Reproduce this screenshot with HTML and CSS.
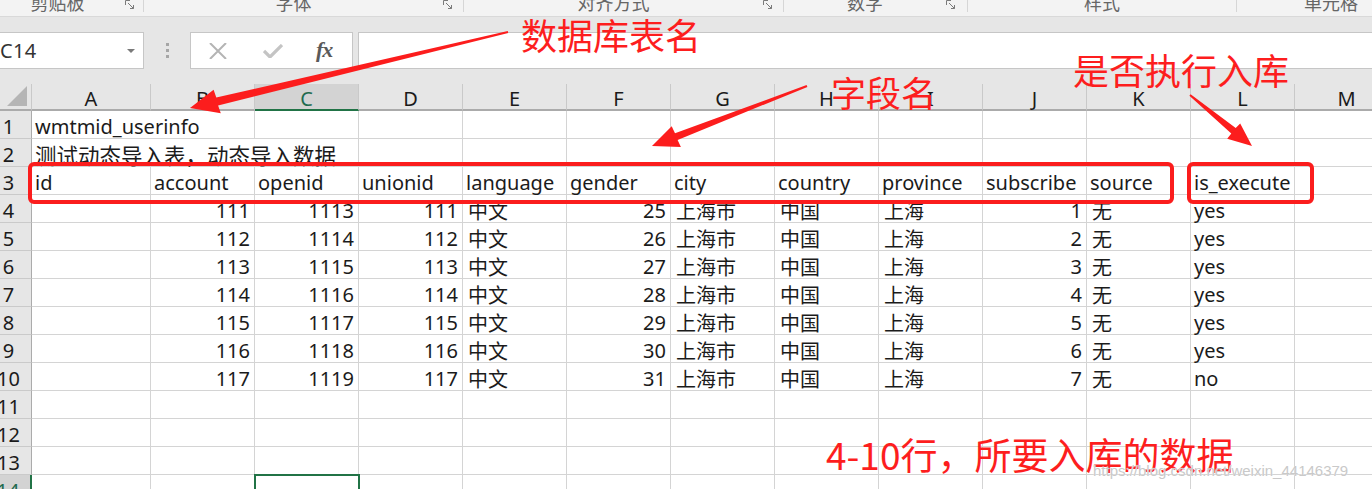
FILE: index.html
```html
<!DOCTYPE html>
<html lang="zh-CN">
<head>
<meta charset="utf-8">
<title>wmtmid_userinfo</title>
<link rel="stylesheet" href="styles.css">
</head>
<body>
<div class="app">
  <div class="ribbon">
    <div class="grp g0"><span class="lbl">剪贴板</span><svg class="launch" viewBox="0 0 10 10"><path d="M.5 5V.5H5M3 3l5.5 5.5M8.5 5v3.5H5"/></svg></div>
    <div class="grp g1"><span class="lbl">字体</span><svg class="launch" viewBox="0 0 10 10"><path d="M.5 5V.5H5M3 3l5.5 5.5M8.5 5v3.5H5"/></svg></div>
    <div class="grp g2"><span class="lbl">对齐方式</span><svg class="launch" viewBox="0 0 10 10"><path d="M.5 5V.5H5M3 3l5.5 5.5M8.5 5v3.5H5"/></svg></div>
    <div class="grp g3"><span class="lbl">数字</span><svg class="launch" viewBox="0 0 10 10"><path d="M.5 5V.5H5M3 3l5.5 5.5M8.5 5v3.5H5"/></svg></div>
    <div class="grp g4"><span class="lbl">样式</span></div>
    <div class="grp g5"><span class="lbl">单元格</span></div>
  </div>
  <div class="strip"></div>
  <div class="fbar">
    <div class="namebox"><span class="ref">C14</span><svg class="caret" viewBox="0 0 8 4"><path d="M0 0h8L4 4z"/></svg></div>
    <div class="dots"><i></i><i></i><i></i></div>
    <div class="btns">
      <svg class="ico-x" viewBox="0 0 18 16"><path d="M1 0l16 16M17 0L1 16"/></svg>
      <svg class="ico-ok" viewBox="0 0 20 14"><path d="M1 7l6 6L19 1"/></svg>
      <span class="fx">fx</span>
    </div>
    <div class="finput"></div>
  </div>
  <div class="strip"></div>

  <div class="sheet">
    <div class="ch corner"><svg viewBox="0 0 20 20"><path d="M20 0V20H0z"/></svg></div>
    <div class="ch">A</div><div class="ch">B</div><div class="ch on">C</div><div class="ch">D</div><div class="ch">E</div><div class="ch">F</div><div class="ch">G</div><div class="ch">H</div><div class="ch">I</div><div class="ch">J</div><div class="ch">K</div><div class="ch">L</div><div class="ch">M</div>

    <div class="rh">1</div><div class="c s2">wmtmid_userinfo</div><div class="c"></div><div class="c"></div><div class="c"></div><div class="c"></div><div class="c"></div><div class="c"></div><div class="c"></div><div class="c"></div><div class="c"></div><div class="c"></div><div class="c"></div>

    <div class="rh">2</div><div class="c s3 zh">测试动态导入表，动态导入数据</div><div class="c"></div><div class="c"></div><div class="c"></div><div class="c"></div><div class="c"></div><div class="c"></div><div class="c"></div><div class="c"></div><div class="c"></div><div class="c"></div>

    <div class="rh">3</div><div class="c">id</div><div class="c">account</div><div class="c">openid</div><div class="c">unionid</div><div class="c">language</div><div class="c">gender</div><div class="c">city</div><div class="c">country</div><div class="c">province</div><div class="c">subscribe</div><div class="c">source</div><div class="c">is_execute</div><div class="c"></div>

    <div class="rh">4</div><div class="c"></div><div class="c n">111</div><div class="c n">1113</div><div class="c n">111</div><div class="c zh">中文</div><div class="c n">25</div><div class="c zh">上海市</div><div class="c zh">中国</div><div class="c zh">上海</div><div class="c n">1</div><div class="c zh">无</div><div class="c">yes</div><div class="c"></div>

    <div class="rh">5</div><div class="c"></div><div class="c n">112</div><div class="c n">1114</div><div class="c n">112</div><div class="c zh">中文</div><div class="c n">26</div><div class="c zh">上海市</div><div class="c zh">中国</div><div class="c zh">上海</div><div class="c n">2</div><div class="c zh">无</div><div class="c">yes</div><div class="c"></div>

    <div class="rh">6</div><div class="c"></div><div class="c n">113</div><div class="c n">1115</div><div class="c n">113</div><div class="c zh">中文</div><div class="c n">27</div><div class="c zh">上海市</div><div class="c zh">中国</div><div class="c zh">上海</div><div class="c n">3</div><div class="c zh">无</div><div class="c">yes</div><div class="c"></div>

    <div class="rh">7</div><div class="c"></div><div class="c n">114</div><div class="c n">1116</div><div class="c n">114</div><div class="c zh">中文</div><div class="c n">28</div><div class="c zh">上海市</div><div class="c zh">中国</div><div class="c zh">上海</div><div class="c n">4</div><div class="c zh">无</div><div class="c">yes</div><div class="c"></div>

    <div class="rh">8</div><div class="c"></div><div class="c n">115</div><div class="c n">1117</div><div class="c n">115</div><div class="c zh">中文</div><div class="c n">29</div><div class="c zh">上海市</div><div class="c zh">中国</div><div class="c zh">上海</div><div class="c n">5</div><div class="c zh">无</div><div class="c">yes</div><div class="c"></div>

    <div class="rh">9</div><div class="c"></div><div class="c n">116</div><div class="c n">1118</div><div class="c n">116</div><div class="c zh">中文</div><div class="c n">30</div><div class="c zh">上海市</div><div class="c zh">中国</div><div class="c zh">上海</div><div class="c n">6</div><div class="c zh">无</div><div class="c">yes</div><div class="c"></div>

    <div class="rh">10</div><div class="c"></div><div class="c n">117</div><div class="c n">1119</div><div class="c n">117</div><div class="c zh">中文</div><div class="c n">31</div><div class="c zh">上海市</div><div class="c zh">中国</div><div class="c zh">上海</div><div class="c n">7</div><div class="c zh">无</div><div class="c">no</div><div class="c"></div>

    <div class="rh">11</div><div class="c"></div><div class="c"></div><div class="c"></div><div class="c"></div><div class="c"></div><div class="c"></div><div class="c"></div><div class="c"></div><div class="c"></div><div class="c"></div><div class="c"></div><div class="c"></div><div class="c"></div>

    <div class="rh">12</div><div class="c"></div><div class="c"></div><div class="c"></div><div class="c"></div><div class="c"></div><div class="c"></div><div class="c"></div><div class="c"></div><div class="c"></div><div class="c"></div><div class="c"></div><div class="c"></div><div class="c"></div>

    <div class="rh">13</div><div class="c"></div><div class="c"></div><div class="c"></div><div class="c"></div><div class="c"></div><div class="c"></div><div class="c"></div><div class="c"></div><div class="c"></div><div class="c"></div><div class="c"></div><div class="c"></div><div class="c"></div>

    <div class="rh on">14</div><div class="c"></div><div class="c"></div><div class="c sel"></div><div class="c"></div><div class="c"></div><div class="c"></div><div class="c"></div><div class="c"></div><div class="c"></div><div class="c"></div><div class="c"></div><div class="c"></div><div class="c"></div>
  </div>

  <svg class="arrows" viewBox="0 0 1372 489" width="1372" height="489">
    <polygon points="507.8,31 216.3,97.6 213.6,89.8 190,108 220.8,113.2 218.1,105.4 508.2,33"/>
    <polygon points="806.6,85.1 675.0,133.3 671.7,126.3 652,146 680.9,146.9 677.6,139.9 807.4,86.9"/>
    <polygon points="1190.6,94.2 1235.7,128.1 1240.2,123.4 1252,146 1227.2,138.7 1231.3,133.5 1189.4,95.8"/>
  </svg>
  <div class="box box-fields"></div>
  <div class="box box-exec"></div>
  <div class="note note-table">数据库表名</div>
  <div class="note note-fields">字段名</div>
  <div class="note note-exec">是否执行入库</div>
  <div class="note note-rows">4-10行，所要入库的数据</div>
  <div class="watermark">https://blog.csdn.net/weixin_44146379</div>
</div>
</body>
</html>
```

FILE: styles.css
```css
* { box-sizing: border-box; }

html, body {
  margin: 0;
  padding: 0;
  background: #ffffff;
  overflow: hidden;
}

.app {
  position: relative;
  width: 1372px;
  height: 489px;
  overflow: hidden;
  font-family: "Noto Sans", "Noto Sans CJK SC", sans-serif;
  color: #1b1b1b;
}

/* ---------- ribbon group labels ---------- */
.ribbon {
  display: flex;
  height: 17px;
  background: #f3f3f3;
  border-bottom: 1px solid #d9d9d9;
  overflow: hidden;
}
.grp {
  display: flex;
  align-items: flex-start;
  border-right: 1px solid #d6d6d6;
  height: 12px;
  flex: none;
}
.g0 { width: 144px; padding-right: 8px; }
.g1 { width: 320px; padding-right: 10px; }
.g2 { width: 320px; padding-right: 10px; }
.g3 { width: 184px; padding-right: 11px; }
.g4 { width: 269px; }
.g5 { width: 200px; border-right: none; padding-right: 12px; }
.lbl {
  flex: 1;
  text-align: center;
  font-family: "Noto Sans CJK SC", sans-serif;
  font-size: 18px;
  line-height: 18px;
  margin-top: -7px;
  color: #666;
}
.g0 .lbl { padding-right: 10px; }
.launch {
  width: 10px;
  height: 10px;
  margin-top: 0;
  fill: none;
  stroke: #7a7a7a;
  stroke-width: 1;
}

.strip {
  height: 15px;
  background: #e6e6e6;
}

/* ---------- formula bar ---------- */
.fbar {
  display: flex;
  height: 37px;
  background: #e6e6e6;
}
.namebox {
  width: 145px;
  margin-left: -1px;
  background: #fff;
  border: 1px solid #c6c6c6;
  display: flex;
  align-items: center;
  justify-content: space-between;
  padding: 0 8px 0 0;
}
.ref {
  font-size: 20px;
  color: #333;
  letter-spacing: 0.3px;
}
.caret {
  width: 8px;
  height: 4px;
  fill: #7a7a7a;
}
.dots {
  width: 46px;
  display: flex;
  flex-direction: column;
  align-items: center;
  justify-content: center;
  gap: 3px;
}
.dots i {
  display: block;
  width: 3px;
  height: 3px;
  background: #a6a6a6;
}
.btns {
  width: 163px;
  background: #fff;
  border: 1px solid #c6c6c6;
  display: flex;
  align-items: center;
  padding-left: 18px;
}
.ico-x {
  width: 18px;
  height: 16px;
  fill: none;
  stroke: #b4b4b4;
  stroke-width: 2;
}
.ico-ok {
  width: 20px;
  height: 14px;
  margin-left: 36px;
  fill: none;
  stroke: #c4c4c4;
  stroke-width: 3.2;
}
.fx {
  margin-left: 33px;
  font-family: "Liberation Serif", "DejaVu Serif", serif;
  font-style: italic;
  font-weight: bold;
  font-size: 22px;
  color: #5a5a5a;
  letter-spacing: -1px;
  line-height: 1;
  margin-top: -2px;
}
.finput {
  flex: 1;
  margin-left: 5px;
  background: #fff;
  border: 1px solid #c6c6c6;
  border-right: none;
}

/* ---------- sheet grid ---------- */
.sheet {
  display: grid;
  grid-template-columns: 32px 119px repeat(12, 104px);
  grid-template-rows: 27px;
  grid-auto-rows: 28px;
  font-size: 20px;
}
.ch {
  background: #e6e6e6;
  border-right: 1px solid #c9c9c9;
  border-bottom: 2px solid #ababab;
  display: flex;
  align-items: flex-end;
  justify-content: center;
  line-height: 20px;
  color: #1b1b1b;
}
.ch.on {
  background: #d3d3d3;
  border-bottom-color: #217346;
  color: #1f6b4f;
}
.ch.corner {
  border-right: 1px solid #c9c9c9;
  align-items: flex-end;
  justify-content: flex-end;
  padding: 0 4px 3px 0;
}
.ch.corner svg {
  width: 20px;
  height: 20px;
  fill: #b5b5b5;
}
.rh {
  background: #e6e6e6;
  border-right: 1px solid #ababab;
  border-bottom: 1px solid #cacaca;
  display: flex;
  align-items: flex-end;
  justify-content: center;
  padding: 0 14px 0 0;
  line-height: 22px;
  white-space: nowrap;
}
.rh.on {
  background: #d3d3d3;
  border-right: 2px solid #217346;
  color: #1f6b4f;
}
.c {
  background: #fff;
  border-right: 1px solid #d4d4d4;
  border-bottom: 1px solid #d4d4d4;
  display: flex;
  align-items: flex-end;
  padding: 0 3px 0 3px;
  line-height: 22px;
  white-space: nowrap;
}
.c.n {
  justify-content: flex-end;
  padding-right: 4px;
}
.c.zh {
  font-family: "Noto Sans CJK SC", sans-serif;
  padding-left: 5px;
}
.c.s2 { grid-column: span 2; }
.c.s3 { grid-column: span 3; padding-left: 3px; font-size: 21.5px; }
.c.sel {
  position: relative;
  z-index: 1;
  outline: 2px solid #217346;
  outline-offset: -1px;
}

/* ---------- annotations (overlay) ---------- */
.arrows {
  position: absolute;
  left: 0;
  top: 0;
  fill: #fc1d1d;
  pointer-events: none;
}
.box {
  position: absolute;
  border: 4px solid #fb1d1d;
  border-radius: 6px;
}
.box-fields { left: 28px; top: 162px; width: 1146px; height: 42px; }
.box-exec { left: 1187px; top: 162px; width: 127px; height: 42px; }

.note {
  position: absolute;
  font-family: "Noto Sans CJK SC", sans-serif;
  font-size: 36px;
  line-height: 1;
  color: #fd1e1e;
  white-space: nowrap;
}
.note-table { left: 521px; top: 16px; }
.note-fields { left: 831px; top: 74px; font-size: 35px; }
.note-exec { left: 1073px; top: 51px; }
.note-rows { left: 826px; top: 436px; font-size: 37px; }

.watermark {
  position: absolute;
  left: 1093px;
  top: 463px;
  font-family: "Liberation Sans", Arial, sans-serif;
  font-size: 15px;
  line-height: 1;
  color: #c9c9c9;
  text-shadow: 0 0 1px #ffffff;
  white-space: nowrap;
}
```
